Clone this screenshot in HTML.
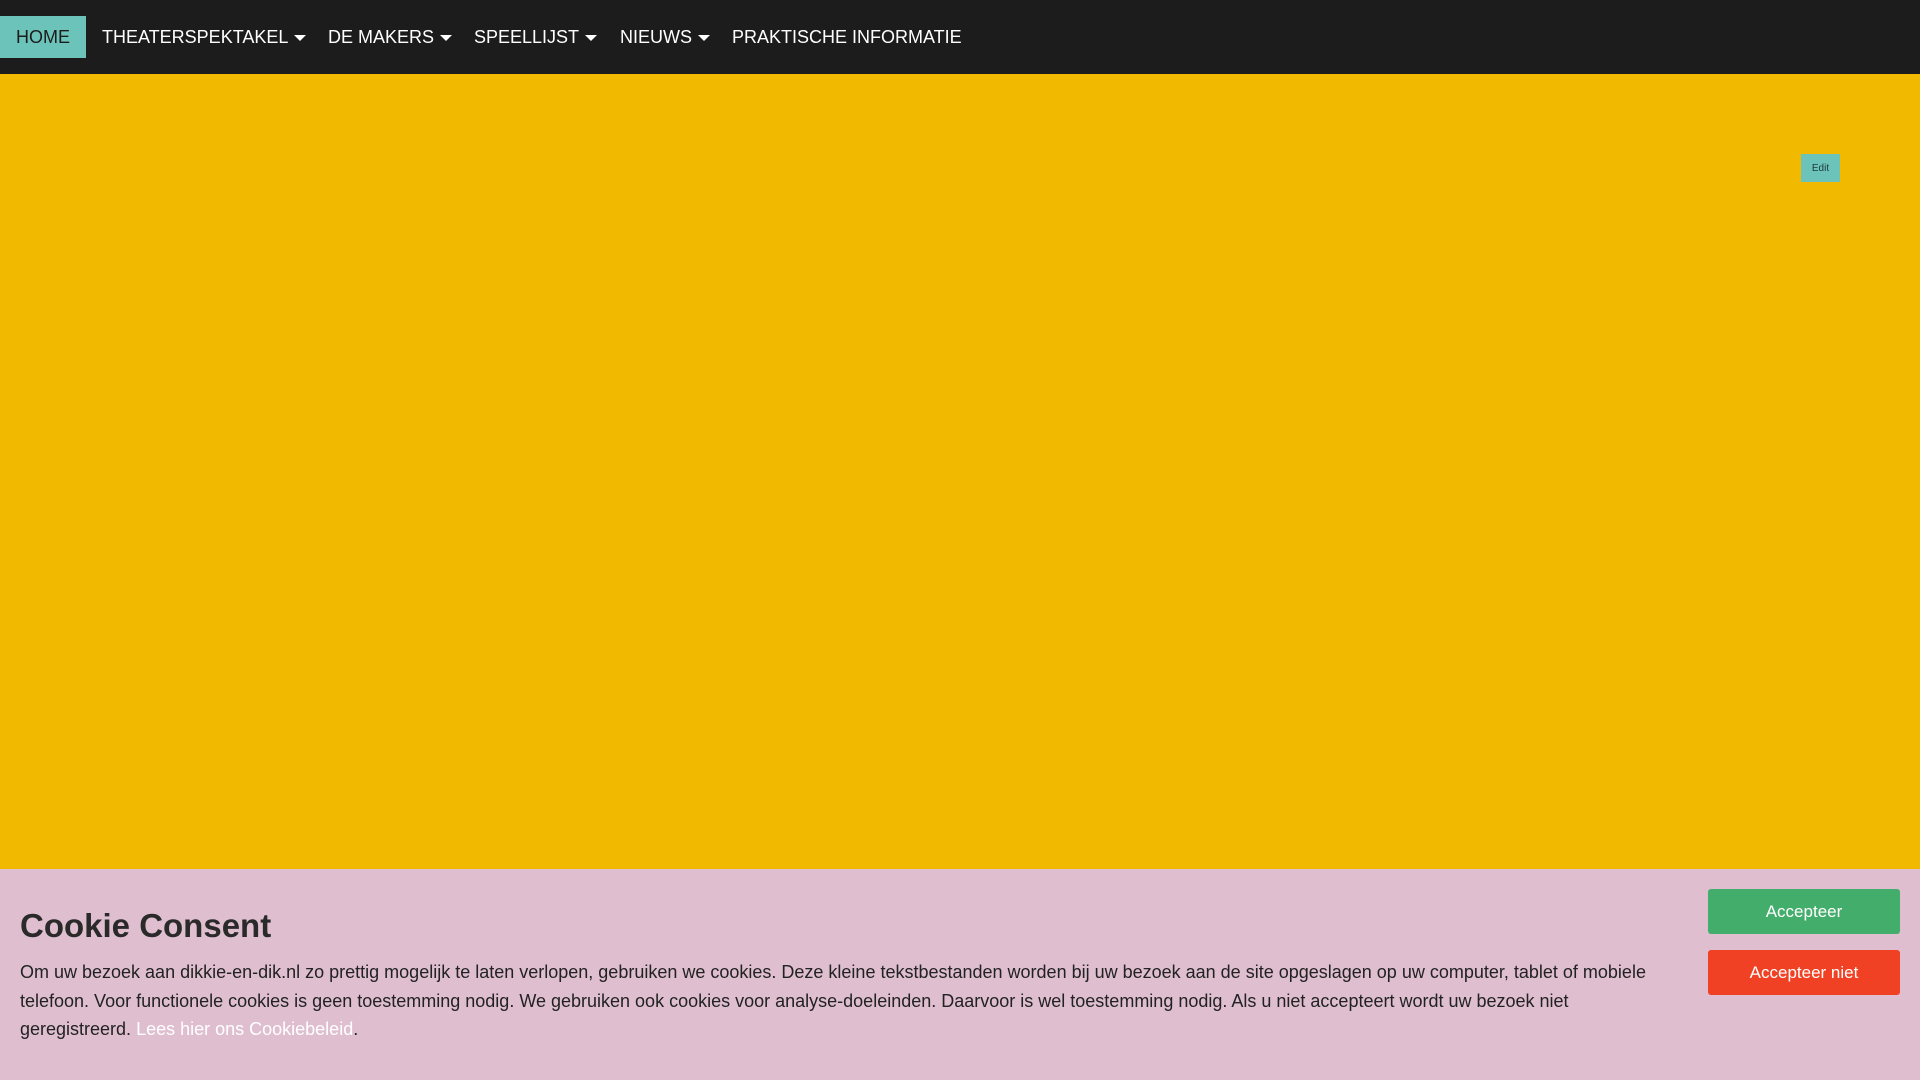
<!DOCTYPE html>
<html><head><style>
*{margin:0;padding:0;box-sizing:border-box}
body{width:1920px;height:1080px;overflow:hidden;background:#f1b900;font-family:"Liberation Sans",Arial,sans-serif;position:relative}
nav{position:absolute;left:0;top:0;width:1920px;height:74px;background:#1c1c1c}
nav a{position:absolute;top:16px;height:42px;line-height:42px;color:#fff;font-size:18px;white-space:nowrap}
nav a.home{left:0;top:16px;width:86px;background:#6cc3b9;color:#1c1c1c;text-align:center;line-height:42px}
.car{display:inline-block;width:0;height:0;border-left:6px solid transparent;border-right:6px solid transparent;border-top:6px solid #fff;vertical-align:middle;margin-left:6px}
.edit{position:absolute;left:1801px;top:154px;width:39px;height:28px;background:#6cc3b9;color:#1c3a3a;font-size:10px;line-height:29px;text-align:center}
.cookie{position:absolute;left:0;top:869px;width:1920px;height:211px;background:#dfbfcf}
.cookie h2{position:absolute;left:20px;top:38px;font-size:33px;font-weight:bold;color:#2a2a2a}
.cookie p{position:absolute;left:20px;top:89px;width:1660px;font-size:18px;line-height:28.5px;color:#222}
.cookie p a{color:#fff}
.btn{position:absolute;left:1708px;width:192px;height:45px;color:#fff;font-size:17px;line-height:45px;text-align:center;border-radius:3px}
</style></head><body>
<nav>
<a class="home">HOME</a>
<a style="left:102px">THEATERSPEKTAKEL<span class="car"></span></a>
<a style="left:328px">DE MAKERS<span class="car"></span></a>
<a style="left:474px">SPEELLIJST<span class="car"></span></a>
<a style="left:620px">NIEUWS<span class="car"></span></a>
<a style="left:732px">PRAKTISCHE INFORMATIE</a>
</nav>
<div class="edit">Edit</div>
<div class="cookie">
<h2>Cookie Consent</h2>
<p>Om uw bezoek aan dikkie-en-dik.nl zo prettig mogelijk te laten verlopen, gebruiken we cookies. Deze kleine tekstbestanden worden bij uw bezoek aan de site opgeslagen op uw computer, tablet of mobiele telefoon. Voor functionele cookies is geen toestemming nodig. We gebruiken ook cookies voor analyse-doeleinden. Daarvoor is wel toestemming nodig. Als u niet accepteert wordt uw bezoek niet geregistreerd. <a>Lees hier ons Cookiebeleid</a>.</p>
<div class="btn" style="top:20px;background:#43ad6b">Accepteer</div>
<div class="btn" style="top:81px;background:#f04124">Accepteer niet</div>
</div>
</body></html>
